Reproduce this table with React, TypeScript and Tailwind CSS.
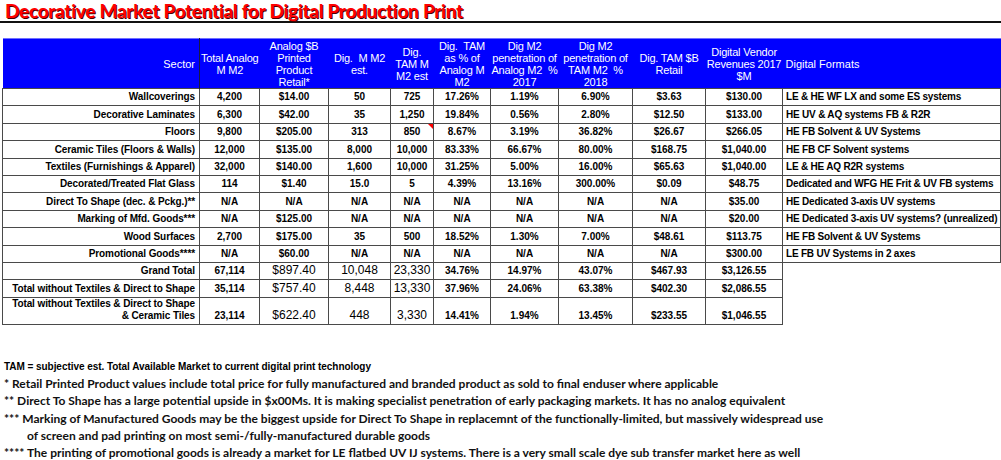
import React from "react";

const rows: string[][] = [
  ["Wallcoverings", "4,200", "$14.00", "50", "725", "17.26%", "1.19%", "6.90%", "$3.63", "$130.00", "LE & HE WF LX and some ES systems"],
  ["Decorative Laminates", "6,300", "$42.00", "35", "1,250", "19.84%", "0.56%", "2.80%", "$12.50", "$133.00", "HE UV & AQ systems FB & R2R"],
  ["Floors", "9,800", "$205.00", "313", "850", "8.67%", "3.19%", "36.82%", "$26.67", "$266.05", "HE FB Solvent & UV Systems"],
  ["Ceramic Tiles (Floors & Walls)", "12,000", "$135.00", "8,000", "10,000", "83.33%", "66.67%", "80.00%", "$168.75", "$1,040.00", "HE FB CF Solvent systems"],
  ["Textiles (Furnishings & Apparel)", "32,000", "$140.00", "1,600", "10,000", "31.25%", "5.00%", "16.00%", "$65.63", "$1,040.00", "LE & HE AQ R2R systems"],
  ["Decorated/Treated Flat Glass", "114", "$1.40", "15.0", "5", "4.39%", "13.16%", "300.00%", "$0.09", "$48.75", "Dedicated and WFG HE Frit & UV FB systems"],
  ["Direct To Shape (dec. & Pckg.)**", "N/A", "N/A", "N/A", "N/A", "N/A", "N/A", "N/A", "N/A", "$35.00", "HE Dedicated 3-axis UV systems"],
  ["Marking of Mfd. Goods***", "N/A", "$125.00", "N/A", "N/A", "N/A", "N/A", "N/A", "N/A", "$20.00", "HE Dedicated 3-axis UV systems? (unrealized)"],
  ["Wood Surfaces", "2,700", "$175.00", "35", "500", "18.52%", "1.30%", "7.00%", "$48.61", "$113.75", "HE FB Solvent & UV Systems"],
  ["Promotional Goods****", "N/A", "$60.00", "N/A", "N/A", "N/A", "N/A", "N/A", "N/A", "$300.00", "LE FB UV Systems in 2 axes"],
];

const totals: string[][] = [
  ["Grand Total", "67,114", "$897.40", "10,048", "23,330", "34.76%", "14.97%", "43.07%", "$467.93", "$3,126.55"],
  ["Total without Textiles & Direct to Shape", "35,114", "$757.40", "8,448", "13,330", "37.96%", "24.06%", "63.38%", "$402.30", "$2,086.55"],
  ["", "23,114", "$622.40", "448", "3,330", "14.41%", "1.94%", "13.45%", "$233.55", "$1,046.55"],
];

const widths = [197, 60, 69, 62, 43, 57, 68, 74, 73, 77, 218];

const headers: React.ReactNode[] = [
  <>Total Analog<br />M M2</>,
  <>Analog $B<br />Printed<br />Product<br />Retail*</>,
  <>Dig.&nbsp; M M2<br />est.</>,
  <>Dig.<br />TAM M<br />M2 est</>,
  <>Dig.&nbsp; TAM<br />as % of<br />Analog M<br />M2</>,
  <>Dig M2<br />penetration of<br />Analog M2&nbsp; %<br />2017</>,
  <>Dig M2<br />penetration of<br />TAM M2&nbsp; %<br />2018</>,
  <>Dig. TAM $B<br />Retail</>,
  <>Digital Vendor<br />Revenues 2017<br />$M</>,
];

const cell = "border border-[#4a4a4a] align-bottom px-[2px] pb-[2px] leading-[12px] whitespace-nowrap";

export default function App() {
  return (
    <div className="w-[1001px] h-[460px] bg-white overflow-hidden font-['Liberation_Sans',Arial,sans-serif] text-black">
      <div className="h-[21px] pl-[5px] font-['Lato',sans-serif] font-bold text-[19px] leading-[21px] text-[#ff0000] [text-shadow:1px_1px_0_#4a0000] tracking-[-0.25px] whitespace-nowrap">
        Decorative Market Potential for Digital Production Print
      </div>
      <div className="h-[2px] bg-[#111]" />
      <div className="h-[15px]" />
      <table className="ml-[2px] border-collapse table-fixed" style={{ width: 998 }}>
        <colgroup>
          {widths.map((w, i) => (
            <col key={i} style={{ width: w }} />
          ))}
        </colgroup>
        <thead>
          <tr className="h-[50px] bg-[#0000ff] text-white text-[11px] leading-[12px] font-normal">
            <th className="border-t border-t-[#6f6fff] border-r border-r-[#1a1a40] text-right pr-[4px] font-normal align-middle">
              Sector
            </th>
            {headers.map((h, i) => (
              <th key={i} className="border-t border-t-[#6f6fff] text-center font-normal align-middle whitespace-nowrap tracking-[-0.2px]">
                {h}
              </th>
            ))}
            <th className="border-t border-t-[#6f6fff] text-left pl-[3px] font-normal align-middle">Digital Formats</th>
          </tr>
        </thead>
        <tbody className="text-[10px] font-bold">
          {rows.map((r, ri) => (
            <tr key={ri} className="h-[17.4px]">
              {r.map((v, ci) => (
                <td
                  key={ci}
                  className={
                    cell +
                    (ci === 0 ? " text-right pr-[4px] tracking-[-0.1px]" : ci === 10 ? " text-left pl-[3px] tracking-[-0.2px]" : " text-center") +
                    (ri === 2 && ci === 4 ? " relative" : "")
                  }
                >
                  {v}
                  {ri === 2 && ci === 4 && (
                    <span className="absolute right-0 top-0 w-0 h-0 border-t-[5px] border-t-[#ff0000] border-l-[5px] border-l-transparent" />
                  )}
                </td>
              ))}
            </tr>
          ))}
          {totals.map((r, ri) => (
            <tr key={"t" + ri} className={ri === 2 ? "h-[25px]" : "h-[17.4px]"}>
              {r.map((v, ci) => (
                <td
                  key={ci}
                  className={
                    cell +
                    (ci === 0 ? " text-right pr-[4px] tracking-[-0.1px]" : " text-center") +
                    (ci >= 2 && ci <= 4 ? " font-normal text-[12px] leading-[13px]" : "")
                  }
                >
                  {ri === 2 && ci === 0 ? (
                    <span className="leading-[12px]">
                      Total without Textiles &amp; Direct to Shape
                      <br />
                      &amp; Ceramic Tiles
                    </span>
                  ) : (
                    v
                  )}
                </td>
              ))}
              <td className="border-0" />
            </tr>
          ))}
        </tbody>
      </table>
      <div className="mt-[33px] pl-[4px]">
        <div className="h-[17px] leading-[17px] text-[10px] font-bold whitespace-nowrap tracking-[-0.05px]">
          TAM = subjective est. Total Available Market to current digital print technology
        </div>
        <div className="font-['Lato',sans-serif] font-bold text-[12px] leading-[17.4px] text-[#111] whitespace-nowrap">
          <div>* Retail Printed Product values include total price for fully manufactured and branded product as sold to final enduser where applicable</div>
          <div>** Direct To Shape has a large potential upside in $x00Ms. It is making specialist penetration of early packaging markets. It has no analog equivalent</div>
          <div>*** Marking of Manufactured Goods may be the biggest upside for Direct To Shape in replacemnt of the functionally-limited, but massively widespread use</div>
          <div className="pl-[23px]">of screen and pad printing on most semi-/fully-manufactured durable goods</div>
          <div>**** The printing of promotional goods is already a market for LE flatbed UV IJ systems. There is a very small scale dye sub transfer market here as well</div>
        </div>
      </div>
    </div>
  );
}
